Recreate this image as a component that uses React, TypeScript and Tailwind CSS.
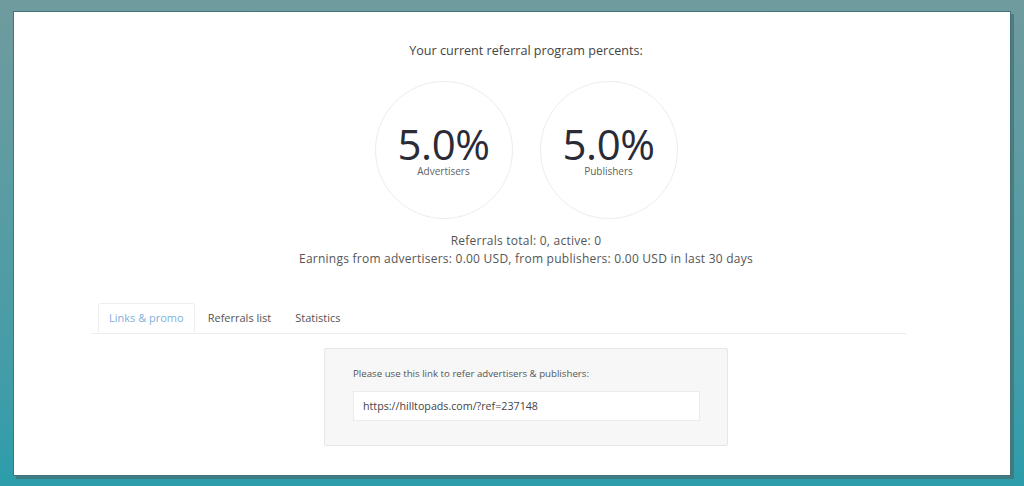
import React from "react";

const tabs = ["Links & promo", "Referrals list", "Statistics"];

function RateCircle({ value, label }: { value: string; label: string }) {
  return (
    <div className="w-[138px] h-[138px] rounded-full border border-[#ececec] flex flex-col items-center justify-center">
      <div className="text-[42px] leading-[42px] text-[#2b2b38] tracking-[-0.5px]">{value}</div>
      <div className="text-[10px] leading-[12px] text-[#5f5f5f]">{label}</div>
    </div>
  );
}

export default function App() {
  return (
    <div
      className="w-[1024px] h-[486px] bg-gradient-to-b from-[#6f9b9e] to-[#2c9dab] pt-[11px] pl-[13px]"
      style={{ fontFamily: '"Open Sans", "Noto Sans", sans-serif' }}
    >
      <div className="w-[998px] h-[465px] bg-white border border-[#41757b] shadow-[3px_3px_0_rgba(70,110,112,0.7)]">
        <div className="pl-[28px] pt-[29px] flex flex-col items-center">
          <div className="text-[12.6px] leading-[20px] text-[#444]">Your current referral program percents:</div>
          <div className="flex gap-[27px] mt-[20px]">
            <RateCircle value="5.0%" label="Advertisers" />
            <RateCircle value="5.0%" label="Publishers" />
          </div>
          <div className="mt-[13px] text-[12px] tracking-[0.24px] leading-[18px] text-[#555] text-center">
            <div>Referrals total: 0, active: 0</div>
            <div>Earnings from advertisers: 0.00 USD, from publishers: 0.00 USD in last 30 days</div>
          </div>
        </div>

        <div className="ml-[77px] mr-[104px] mt-[35px] border-b border-[#ededed] flex pl-[7px]">
          {tabs.map((t, i) => (
            <div
              key={t}
              className={
                i === 0
                  ? "px-[10px] h-[30px] mr-[2px] mb-[-1px] flex items-center text-[11px] text-[#7fb0dc] bg-white border border-[#efefef] border-b-white rounded-t-[3px]"
                  : "px-[10px] h-[30px] mr-[2px] flex items-center text-[11px] text-[#555] border border-transparent"
              }
            >
              {t}
            </div>
          ))}
        </div>

        <div className="pl-[28px] flex justify-center mt-[14px]">
          <div className="w-[404px] h-[98px] bg-[#f7f7f7] border border-[#e6e6e6] rounded-[2px] pl-[28px] pt-[18px]">
            <div className="text-[9.7px] leading-[14px] text-[#555]">
              Please use this link to refer advertisers &amp; publishers:
            </div>
            <div className="mt-[10px] w-[347px] h-[30px] bg-white border border-[#ebebeb] flex items-center pl-[9px] text-[10.7px] text-[#444]">
              https://hilltopads.com/?ref=237148
            </div>
          </div>
        </div>
      </div>
    </div>
  );
}
